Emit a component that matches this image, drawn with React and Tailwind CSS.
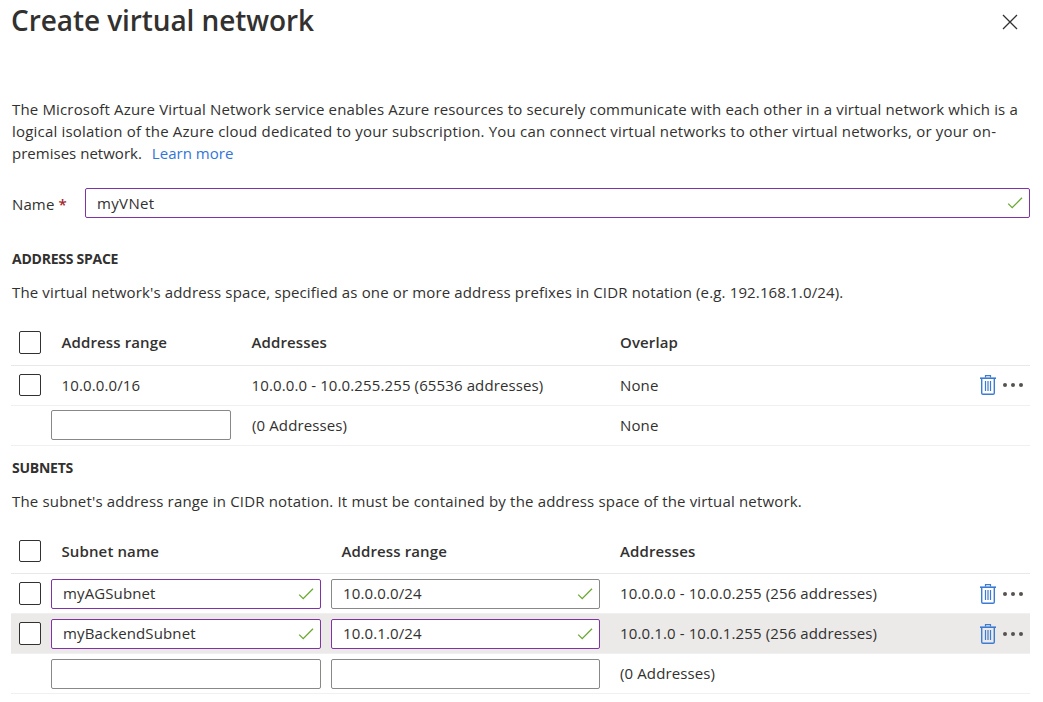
import React from "react";

function Check() {
  return (
    <svg className="h-4 w-4 shrink-0" viewBox="0 0 16 16" fill="none" stroke="#6aa832" strokeWidth="1.3">
      <path d="M1.2 8.6 L5.2 12.6 L15 2.8" />
    </svg>
  );
}

function Close() {
  return (
    <svg className="h-4 w-4" viewBox="0 0 16 16" fill="none" stroke="#323130" strokeWidth="1.3">
      <path d="M1 1 L15 15 M15 1 L1 15" />
    </svg>
  );
}

function Trash() {
  return (
    <svg className="h-5 w-4" viewBox="0 0 16 20" fill="none" stroke="#3c7bd3">
      <path d="M0 3.2 H16" strokeWidth="1.6" />
      <path d="M5.5 2.5 V0.7 H10.5 V2.5" strokeWidth="1.2" />
      <path d="M1.7 4 V18 Q1.7 19.3 3 19.3 H13 Q14.3 19.3 14.3 18 V4" strokeWidth="1.4" />
      <path d="M5.5 6 V16 M8 6 V16 M10.5 6 V16" strokeWidth="1.2" />
    </svg>
  );
}

function Dots() {
  return (
    <svg className="h-1 w-5" viewBox="0 0 20 4" fill="#55524f">
      <circle cx="2" cy="2" r="2" />
      <circle cx="10" cy="2" r="2" />
      <circle cx="18" cy="2" r="2" />
    </svg>
  );
}

function Actions() {
  return (
    <div className="ml-auto flex items-center gap-[7px] pr-[7px]">
      <Trash />
      <Dots />
    </div>
  );
}

function Box({ tall }) {
  return (
    <div
      className={`ml-2 mr-2.5 w-[22px] shrink-0 rounded-[2px] border border-[#323130] bg-white ${
        tall ? "h-[23px]" : "h-[22px]"
      }`}
    />
  );
}

function Field({ value, valid, touched, raised, className }) {
  return (
    <div
      className={`flex h-[30px] shrink-0 items-center justify-between rounded-[2px] border bg-white pl-[11px] pr-[6px] ${
        touched ? "border-[#8133a5]" : "border-[#8a8886]"
      } ${className}`}
    >
      <span className={raised ? "pb-[2px]" : ""}>{value}</span>
      {valid && <Check />}
    </div>
  );
}

export default function App() {
  return (
    <div className="h-[702px] w-[1043px] overflow-hidden bg-white pl-[11px] pr-[13px] font-['Open_Sans','Noto_Sans',sans-serif] text-[15px] leading-[22px] tracking-[0.12px] text-[#323130]">
      <header className="flex h-[98px] items-start justify-between pr-3">
        <h1 className="whitespace-nowrap text-[28px] font-semibold leading-[40px] tracking-[-0.08px]">Create virtual network</h1>
        <div className="pt-[14px]">
          <Close />
        </div>
      </header>

      <div className="h-[90px] whitespace-nowrap pl-px">
        <p className="tracking-[0.16px]">The Microsoft Azure Virtual Network service enables Azure resources to securely communicate with each other in a virtual network which is a</p>
        <p className="tracking-[0.19px]">logical isolation of the Azure cloud dedicated to your subscription. You can connect virtual networks to other virtual networks, or your on-</p>
        <p className="tracking-[0.02px]">premises network. <span className="ml-1.5 text-[#3375d6]">Learn more</span></p>
      </div>

      <div className="flex h-[60px] items-start">
        <div className="w-[74px] shrink-0 pl-px pt-[5px]">Name <span className="font-semibold text-[#a4262c]">*</span></div>
        <Field value="myVNet" valid touched className="flex-1 tracking-[0.35px]" />
      </div>

      <h2 className="h-[33px] pl-px text-[14px] font-bold tracking-[-0.25px]">ADDRESS SPACE</h2>
      <p className="h-[38px] pl-px tracking-[0.14px]">The virtual network's address space, specified as one or more address prefixes in CIDR notation (e.g. 192.168.1.0/24).</p>

      <div className="flex h-[47px] items-center border-b border-[#e8e8e8] font-semibold">
        <Box tall />
        <div className="w-[190px] pl-[10.5px]">Address range</div>
        <div className="w-[369px] pl-[10.5px]">Addresses</div>
        <div className="pl-[10px]">Overlap</div>
      </div>
      <div className="flex h-10 items-center border-b border-[#f0f0f0] pb-[2px]">
        <Box />
        <div className="w-[190px] pl-[10.5px]">10.0.0.0/16</div>
        <div className="w-[369px] pl-[10.5px]">10.0.0.0 - 10.0.255.255 (65536 addresses)</div>
        <div className="pl-[10px]">None</div>
        <Actions />
      </div>
      <div className="flex h-10 items-center border-b border-[#f0f0f0] pb-[2px] pl-10">
        <Field className="w-[180px]" />
        <div className="w-[379px] pl-[21px]">(0 Addresses)</div>
        <div className="pl-[10px]">None</div>
      </div>

      <h2 className="mt-[11px] h-[33px] pl-px text-[14px] font-bold tracking-[-0.25px]">SUBNETS</h2>
      <p className="h-[40px] pl-px tracking-[0.17px]">The subnet's address range in CIDR notation. It must be contained by the address space of the virtual network.</p>

      <div className="flex h-[44px] items-center border-b border-[#e8e8e8] pb-[2px] font-semibold">
        <Box />
        <div className="w-[280px] pl-[10.5px]">Subnet name</div>
        <div className="w-[279px] pl-[10.5px]">Address range</div>
        <div className="pl-[10px]">Addresses</div>
      </div>
      <div className="flex h-10 items-center border-b border-[#f0f0f0]">
        <Box tall />
        <Field value="myAGSubnet" valid touched raised className="mr-2.5 w-[270px]" />
        <Field value="10.0.0.0/24" valid raised className="w-[269px]" />
        <div className="pb-[2px] pl-5">10.0.0.0 - 10.0.0.255 (256 addresses)</div>
        <Actions />
      </div>
      <div className="flex h-10 items-center border-b border-[#f0f0f0] bg-[#ebeae9]">
        <Box tall />
        <Field value="myBackendSubnet" valid touched raised className="mr-2.5 w-[270px]" />
        <Field value="10.0.1.0/24" valid touched raised className="w-[269px]" />
        <div className="pb-[2px] pl-5">10.0.1.0 - 10.0.1.255 (256 addresses)</div>
        <Actions />
      </div>
      <div className="flex h-10 items-center border-b border-[#f0f0f0] pl-10">
        <Field className="mr-2.5 w-[270px]" />
        <Field className="w-[269px]" />
        <div className="pb-[2px] pl-5">(0 Addresses)</div>
      </div>
    </div>
  );
}
